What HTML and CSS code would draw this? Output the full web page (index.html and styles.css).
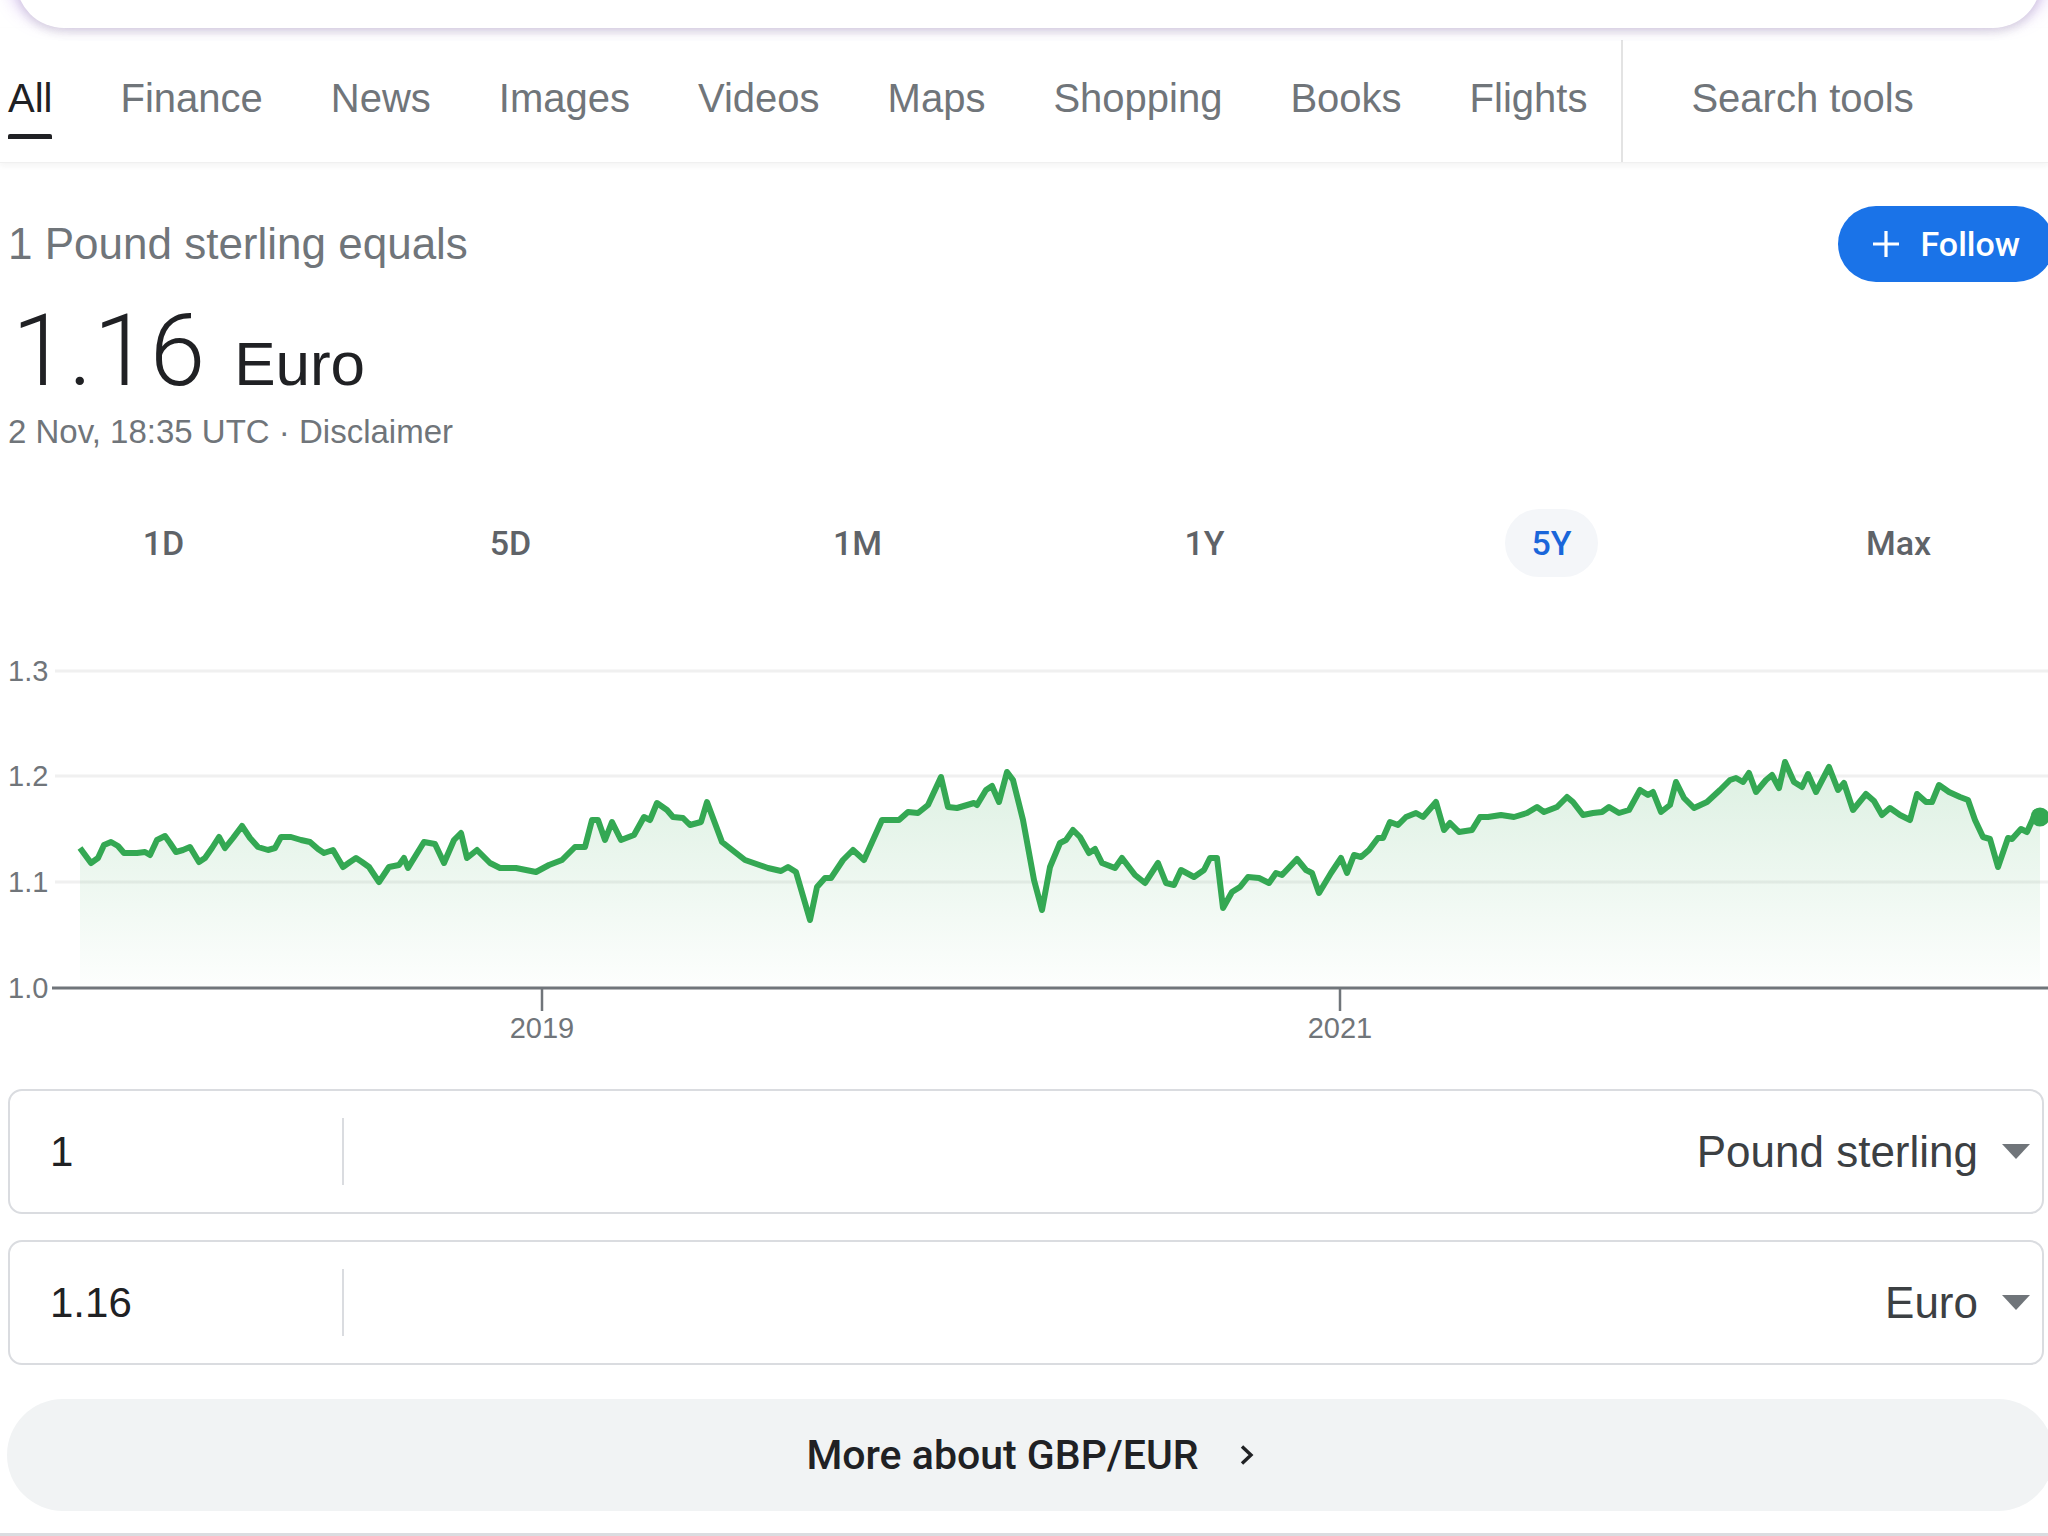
FILE: index.html
```html
<!DOCTYPE html>
<html lang="en">
<head>
    <meta charset="UTF-8">
    <title>GBP to EUR</title>
    <link rel="stylesheet" href="styles.css">
</head>
<body>
    <div class="search-box"></div>

    <nav class="tabs">
        <a class="tab active" href="javascript:;">All</a>
        <a class="tab" href="javascript:;">Finance</a>
        <a class="tab" href="javascript:;">News</a>
        <a class="tab" href="javascript:;">Images</a>
        <a class="tab" href="javascript:;">Videos</a>
        <a class="tab" href="javascript:;">Maps</a>
        <a class="tab" href="javascript:;">Shopping</a>
        <a class="tab" href="javascript:;">Books</a>
        <a class="tab" href="javascript:;">Flights</a>
        <span class="tab-divider"></span>
        <a class="tab tools" href="javascript:;">Search tools</a>
    </nav>

    <div class="card">
        <div class="headline">
            <div class="equals">1 Pound sterling equals</div>
            <button class="follow">
                <svg width="28" height="28" viewBox="0 0 28 28"><path d="M14 1v26M1 14h26" stroke="#fff" stroke-width="3.2" fill="none"/></svg>
                Follow
            </button>
        </div>
        <div class="rate"><span class="value">1.16</span> <span class="unit">Euro</span></div>
        <div class="stamp">2 Nov, 18:35 UTC · Disclaimer</div>

        <div class="ranges">
            <span class="range">1D</span>
            <span class="range">5D</span>
            <span class="range">1M</span>
            <span class="range">1Y</span>
            <span class="range active">5Y</span>
            <span class="range">Max</span>
        </div>

        <!-- chart: viewBox uses page coordinates -->
        <svg class="chart" width="2048" height="473" viewBox="0 577 2048 473">
            <defs>
                <linearGradient id="fade" x1="0" y1="0" x2="0" y2="1">
                    <stop offset="0" stop-color="#34a853" stop-opacity="0.17"/>
                    <stop offset="1" stop-color="#34a853" stop-opacity="0.01"/>
                </linearGradient>
            </defs>
            <line class="grid" x1="55" y1="671" x2="2048" y2="671"/>
            <line class="grid" x1="55" y1="776" x2="2048" y2="776"/>
            <line class="grid" x1="55" y1="882" x2="2048" y2="882"/>
            <text class="ylabel" x="8" y="681">1.3</text>
            <text class="ylabel" x="8" y="786">1.2</text>
            <text class="ylabel" x="8" y="892">1.1</text>
            <text class="ylabel" x="8" y="998">1.0</text>
            <path id="area" fill="url(#fade)" d=""/>
            <polyline id="line" class="line" points=""/>
            <line class="axis" x1="52" y1="988" x2="2048" y2="988"/>
            <line class="tick" x1="542" y1="988" x2="542" y2="1011"/>
            <line class="tick" x1="1340" y1="988" x2="1340" y2="1011"/>
            <text class="xlabel" x="542" y="1038">2019</text>
            <text class="xlabel" x="1340" y="1038">2021</text>
            <circle cx="2040" cy="817" r="9.5" fill="#34a853"/>
        </svg>

        <div class="converter">
            <div class="conv-row">
                <div class="amount">1</div>
                <span class="conv-divider"></span>
                <div class="currency">Pound sterling <span class="caret"></span></div>
            </div>
            <div class="conv-row">
                <div class="amount">1.16</div>
                <span class="conv-divider"></span>
                <div class="currency">Euro <span class="caret"></span></div>
            </div>
        </div>

        <a class="more" href="javascript:;">More about GBP/EUR
            <svg width="16" height="22" viewBox="0 0 16 22"><path d="M3 2.5l9 8.5-9 8.5" stroke="#202124" stroke-width="3.4" fill="none"/></svg>
        </a>
        <div class="card-end"></div>
    </div>

    <script>
        // traced weekly GBP/EUR points, in page pixels
        const pts = '80,848 91,863 98,858 104,845 111,842 118,846 124,853 137,853 145,852 150,855 157,840 165,836 170,843 176,852 183,850 190,847 199,862 205,858 212,848 219,837 225,848 233,838 242,826 250,838 258,847 268,850 275,848 281,837 291,837 301,840 310,842 318,849 324,853 333,850 343,867 350,862 356,858 362,862 369,867 379,882 389,867 399,865 404,858 408,868 416,855 424,842 435,844 444,863 454,840 461,833 467,858 477,850 490,863 500,868 516,868 536,872 549,865 562,860 575,847 585,847 592,820 598,820 605,840 612,822 621,840 634,835 644,817 650,820 657,803 667,810 673,817 683,818 690,825 701,822 707,802 722,842 745,860 768,868 781,871 788,867 796,872 810,920 817,887 825,878 831,878 843,860 853,850 864,860 882,820 899,820 908,812 918,813 928,805 941,777 948,807 957,808 974,803 977,805 986,790 992,786 999,802 1007,772 1013,780 1023,820 1034,880 1042,910 1050,867 1060,843 1066,840 1073,830 1080,837 1089,853 1095,849 1102,863 1115,868 1122,858 1135,875 1145,883 1158,863 1166,883 1174,885 1181,870 1194,877 1204,870 1210,858 1217,858 1223,908 1232,892 1240,887 1248,877 1259,878 1269,883 1276,873 1282,875 1297,859 1306,870 1312,873 1319,893 1331,873 1341,858 1347,873 1354,855 1361,857 1369,850 1378,838 1383,838 1390,822 1398,825 1406,817 1416,813 1423,817 1436,802 1444,830 1450,823 1459,832 1472,830 1480,817 1488,817 1501,815 1514,817 1527,813 1537,807 1544,812 1557,807 1567,797 1573,802 1583,815 1593,813 1602,812 1609,807 1619,813 1629,810 1640,790 1648,795 1653,792 1661,812 1670,805 1676,782 1684,798 1694,808 1707,802 1720,790 1730,780 1736,778 1743,782 1749,773 1756,792 1766,780 1772,775 1779,788 1785,762 1794,782 1802,787 1808,774 1816,792 1829,767 1838,790 1844,783 1853,810 1866,794 1874,801 1882,815 1890,808 1900,815 1910,820 1917,794 1926,802 1932,802 1939,785 1949,792 1960,797 1968,800 1975,820 1983,837 1990,839 1998,867 2008,838 2012,839 2021,829 2027,832 2036,812 2040,817';
        document.getElementById('line').setAttribute('points', pts);
        document.getElementById('area').setAttribute('d', 'M80,988 L' + pts.split(' ').join(' L') + ' L2040,988 Z');
    </script>
</body>
</html>
```

FILE: styles.css
```css
html,
body{
    margin: 0;
    padding: 0;
    overflow-x: hidden;
    background: #ffffff;
}
body{
    width: 2048px;
    font-family: "Liberation Sans", Arial, sans-serif;
    color: #202124;
}
a{
    text-decoration: none;
    color: inherit;
}

.search-box{
    position: relative;
    z-index: 2;
    height: 80px;
    margin: -52px 7px 0 16px;
    background: #ffffff;
    border-radius: 0 0 48px 48px;
    box-shadow: 0 5px 9px rgba(60, 64, 67, 0.13), -10px -4px 16px rgba(168, 120, 235, 0.28), 10px -4px 16px rgba(168, 120, 235, 0.28);
}

/* tab bar */
.tabs{
    position: relative;
    z-index: 1;
    display: flex;
    height: 134px;
    padding-left: 8px;
    background: #ffffff;
    border-bottom: 1px solid #f0f0f0;
    box-shadow: 0 3px 6px rgba(32, 33, 36, 0.05);
}
.tab{
    display: flex;
    flex-direction: column;
    align-items: stretch;
    padding: 47px 34px 0 34px;
    font-size: 40px;
    line-height: 46px;
    color: #70757a;
    white-space: nowrap;
}
.tab.active{
    padding-left: 0;
    color: #202124;
}
.tab.active::after{
    content: '';
    height: 5px;
    margin-top: 13px;
    background: #202124;
    border-radius: 2px 2px 0 0;
}
.tab.tools{
    padding-left: 68px;
}
.tab-divider{
    width: 2px;
    margin-top: 12px;
    background: #e3e3e3;
}

/* card */
.card{
    padding-left: 8px;
}
.headline{
    display: flex;
    align-items: center;
    justify-content: space-between;
    height: 76px;
    margin-top: 43px;
}
.equals{
    font-size: 44px;
    line-height: 52px;
    color: #70757a;
}
.follow{
    display: flex;
    align-items: center;
    gap: 20px;
    height: 76px;
    margin-right: -6px;
    padding: 0 34px;
    border: none;
    border-radius: 38px;
    background: #1a73e8;
    color: #ffffff;
    font-family: Roboto, "Liberation Sans", sans-serif;
    font-size: 34px;
    font-weight: 500;
}
.rate{
    margin-top: 18px;
    padding-left: 4px;
    font-size: 100px;
    line-height: 100px;
    color: #202124;
}
.rate .value{
    font-family: Roboto, "Liberation Sans", sans-serif;
    font-weight: 300;
    letter-spacing: 1px;
}
.rate .unit{
    font-size: 62px;
    line-height: 1;
}
.stamp{
    margin-top: 11px;
    font-size: 33px;
    line-height: 40px;
    color: #70757a;
}

.ranges{
    display: grid;
    grid-template-columns: repeat(6, 347px);
    height: 68px;
    margin: 57px 0 0 -18px;
}
.range{
    justify-self: center;
    display: flex;
    align-items: center;
    padding: 0 26px;
    border-radius: 34px;
    font-family: Roboto, "Liberation Sans", sans-serif;
    font-size: 34px;
    font-weight: 500;
    color: #5f6368;
}
.range.active{
    background: #f4f6f9;
    color: #1a66da;
}

.chart{
    display: block;
    margin-left: -8px;
}
.chart .grid{
    stroke: #f0f0f0;
    stroke-width: 3;
}
.chart .axis{
    stroke: #70757a;
    stroke-width: 3;
}
.chart .tick{
    stroke: #70757a;
    stroke-width: 2.5;
}
.chart .line{
    fill: none;
    stroke: #34a853;
    stroke-width: 6;
    stroke-linejoin: round;
}
.chart .ylabel,
.chart .xlabel{
    font-family: "Liberation Sans", Arial, sans-serif;
    font-size: 29px;
    fill: #70757a;
}
.chart .xlabel{
    text-anchor: middle;
}

/* converter */
.converter{
    display: flex;
    flex-direction: column;
    gap: 26px;
    margin: 39px 4px 0 0;
}
.conv-row{
    display: flex;
    align-items: center;
    height: 125px;
    box-sizing: border-box;
    border: 2px solid #dadce0;
    border-radius: 14px;
}
.amount{
    width: 332px;
    box-sizing: border-box;
    padding-left: 40px;
    font-size: 42px;
    color: #202124;
}
.conv-divider{
    width: 2px;
    height: 67px;
    background: #dadce0;
}
.currency{
    flex: 1;
    display: flex;
    align-items: center;
    justify-content: flex-end;
    gap: 24px;
    padding-right: 12px;
    font-size: 44px;
    color: #3c4043;
}
.caret{
    width: 0;
    height: 0;
    border-left: 14px solid transparent;
    border-right: 14px solid transparent;
    border-top: 15px solid #70757a;
}

.more{
    display: flex;
    align-items: center;
    justify-content: center;
    gap: 40px;
    height: 112px;
    margin: 34px -6px 0 -1px;
    border-radius: 56px;
    background: #f1f3f4;
    font-family: Roboto, "Liberation Sans", sans-serif;
    font-size: 41px;
    font-weight: 500;
    color: #202124;
}
.card-end{
    margin: 22px 0 0 -8px;
    border-top: 3px solid #dadce0;
}
```
